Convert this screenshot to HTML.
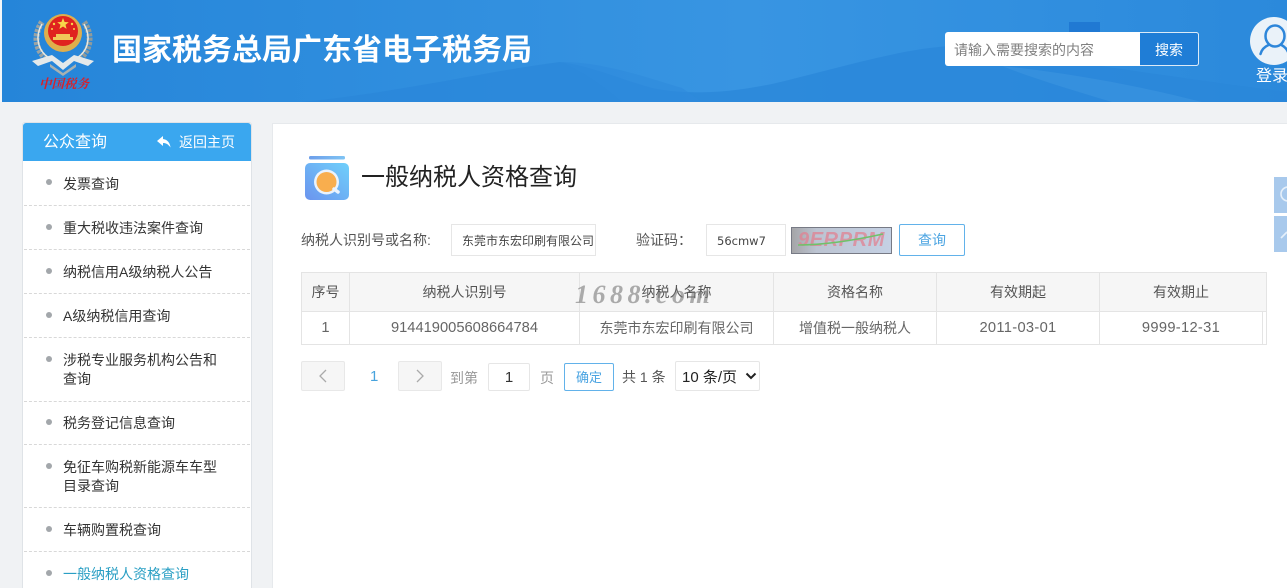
<!DOCTYPE html>
<html lang="zh-CN"><head><meta charset="utf-8"><title>一般纳税人资格查询</title>
<style>
html,body{margin:0;padding:0;width:1287px;height:588px;overflow:hidden;background:#f0f2f4;}
body{position:relative;font-family:"Liberation Sans","Noto Sans CJK SC",sans-serif;color:#333;}
.a{position:absolute;white-space:nowrap;}
.t{line-height:20px;height:20px;}
.c{text-align:center;}
.dash{position:absolute;left:24px;width:226px;height:0;border-top:1px dashed #d8d8d8;}
.dot{position:absolute;left:46px;width:6px;height:6px;border-radius:50%;background:#a3a7ab;}
.m{position:absolute;left:63px;font-size:14px;line-height:20px;color:#333;white-space:nowrap;}
.b{position:absolute;box-sizing:border-box;}
.v{position:absolute;width:1px;background:#e4e4e4;}
.th{position:absolute;top:282px;font-size:14px;line-height:20px;color:#555;text-align:center;white-space:nowrap;}
.td{position:absolute;top:318px;font-size:14px;line-height:20px;color:#666;text-align:center;white-space:nowrap;}
.n{font-size:14.7px;}
.d{font-size:14.7px;letter-spacing:.3px;}
</style></head><body>

<!-- header -->
<svg class="a" style="left:2px;top:0;" width="1285" height="102" viewBox="0 0 1285 102">
<defs>
<linearGradient id="g" x1="0" y1="0" x2="1" y2="0"><stop offset="0" stop-color="#2585d9"/><stop offset=".58" stop-color="#3895e2"/><stop offset=".8" stop-color="#318fdf"/><stop offset="1" stop-color="#2b89db"/></linearGradient>
</defs>
<rect width="1285" height="102" fill="url(#g)"/>
<path d="M0 102 L300 102 C400 92 480 72 558 62 C590 66 620 80 650 88 C690 96 730 92 770 84 C830 70 900 48 950 46 C1040 56 1160 76 1285 92 L1285 102Z" fill="#2a87da" opacity=".8"/>
<path d="M560 62 C600 62 640 76 680 88 L700 102 L620 102 C600 84 580 72 560 62Z" fill="#2e8bdc" opacity=".6"/>
<path d="M1000 66 C1060 72 1130 84 1200 102 L1110 102 C1070 90 1030 78 1000 66Z" fill="#3f97e2" opacity=".5"/>
<rect x="1067" y="22" width="31" height="12" fill="#2079d3"/>
</svg>
<div class="a" style="left:0;top:0;width:2px;height:102px;background:#f3f6f9;"></div>

<!-- logo -->
<svg class="a" style="left:28px;top:8px;" width="70" height="72" viewBox="0 0 70 72">
<path d="M14 14 C5 27 7 43 20 52" stroke="#9aa3a4" stroke-width="6" fill="none" stroke-dasharray="3 1.2"/>
<path d="M56 14 C65 27 63 43 50 52" stroke="#8f9b9c" stroke-width="6" fill="none" stroke-dasharray="3 1.2"/>
<path d="M14 16 C7 28 9 42 21 50" stroke="#e6e9e4" stroke-width="1.5" fill="none"/>
<path d="M56 16 C63 28 61 42 49 50" stroke="#e6e9e4" stroke-width="1.5" fill="none"/>
<circle cx="35" cy="25" r="19" fill="#dfae4c"/>
<circle cx="35" cy="23" r="15" fill="#e0231f"/>
<path d="M35 10l1.6 4 4.2.2-3.3 2.6 1.1 4.1-3.6-2.4-3.6 2.4 1.1-4.1-3.3-2.6 4.2-.2z" fill="#f7d64a"/>
<circle cx="26" cy="16" r="1.2" fill="#f7d64a"/><circle cx="44" cy="16" r="1.2" fill="#f7d64a"/><circle cx="24" cy="21" r="1" fill="#f7d64a"/><circle cx="46" cy="21" r="1" fill="#f7d64a"/>
<path d="M25 29h20v3H25zM28 26h14v3H28z" fill="#f0c75a"/>
<path d="M4 53 L24 47 L35 55 L46 47 L66 53 L60 58 L46 53 L35 62 L24 53 L10 58Z" fill="#e4e9ea"/>
<path d="M22 56 L35 65 L48 56 L48 59 L35 68 L22 59Z" fill="#a9b1b0"/>
</svg>
<div class="a" style="left:39px;top:76px;font-family:'Liberation Serif','Noto Serif CJK SC',serif;font-size:12.5px;line-height:16px;color:#d8202a;font-style:italic;font-weight:700;">中国税务</div>

<div class="a" style="left:112px;top:31px;font-size:30px;line-height:40px;font-weight:700;color:#fff;">国家税务总局广东省电子税务局</div>

<!-- search -->
<div class="b" style="left:945px;top:32px;width:254px;height:34px;background:#fff;border-radius:3px;"></div>
<div class="a t" style="left:954px;top:40px;font-size:14px;color:#808080;">请输入需要搜索的内容</div>
<div class="b" style="left:1140px;top:32px;width:59px;height:34px;background:#1f7dd6;border:1px solid #dceaf7;border-left:0;border-radius:0 3px 3px 0;"></div>
<div class="a t c" style="left:1140px;top:40px;width:58px;font-size:14px;color:#fff;">搜索</div>

<!-- avatar -->
<svg class="a" style="left:1250px;top:17px;" width="37" height="48" viewBox="0 0 37 48">
<circle cx="24" cy="24" r="24" fill="#eaf2f9"/>
<ellipse cx="25" cy="19" rx="9.5" ry="10.5" fill="none" stroke="#2d86da" stroke-width="2.5"/>
<path d="M10.5 37 C11.5 33 14 30 18.5 28 M31.5 28 C35 30 37 32 38 35" fill="none" stroke="#2d86da" stroke-width="2.5" stroke-linecap="round"/>
</svg>
<div class="a" style="left:1256px;top:66px;font-size:16px;line-height:22px;color:#fff;">登录</div>

<!-- sidebar -->
<div class="b" style="left:22px;top:122px;width:230px;height:470px;background:#fff;border:1px solid #dfe3e7;border-radius:3px 3px 0 0;"></div>
<div class="b" style="left:23px;top:123px;width:228px;height:38px;background:#3aa7ef;border-radius:3px 3px 0 0;"></div>
<div class="a" style="left:43px;top:132px;font-size:16px;line-height:22px;color:#fff;">公众查询</div>
<svg class="a" style="left:156px;top:135px;" width="16" height="14" viewBox="0 0 16 14"><path d="M7 1 L1 6 L7 11 V8 C10 8 12 9 14.5 12.5 C14 8 11.5 4.5 7 4Z" fill="#fff"/></svg>
<div class="a t" style="left:179px;top:132px;font-size:14px;color:#fff;">返回主页</div>

<div class="dot" style="top:179px"></div><div class="m" style="top:174px">发票查询</div><div class="dash" style="top:205px"></div>
<div class="dot" style="top:224px"></div><div class="m" style="top:218px">重大税收违法案件查询</div><div class="dash" style="top:249px"></div>
<div class="dot" style="top:268px"></div><div class="m" style="top:262px">纳税信用A级纳税人公告</div><div class="dash" style="top:293px"></div>
<div class="dot" style="top:312px"></div><div class="m" style="top:306px">A级纳税信用查询</div><div class="dash" style="top:337px"></div>
<div class="dot" style="top:356px"></div><div class="m" style="top:350px">涉税专业服务机构公告和</div><div class="m" style="top:369px">查询</div><div class="dash" style="top:401px"></div>
<div class="dot" style="top:419px"></div><div class="m" style="top:413px">税务登记信息查询</div><div class="dash" style="top:444px"></div>
<div class="dot" style="top:463px"></div><div class="m" style="top:457px">免征车购税新能源车车型</div><div class="m" style="top:476px">目录查询</div><div class="dash" style="top:507px"></div>
<div class="dot" style="top:526px"></div><div class="m" style="top:520px">车辆购置税查询</div><div class="dash" style="top:551px"></div>
<div class="dot" style="top:570px"></div><div class="m" style="top:564px;color:#2a9fc4;">一般纳税人资格查询</div>

<!-- main panel -->
<div class="b" style="left:272px;top:123px;width:1020px;height:470px;background:#fff;border:1px solid #e6e9ec;"></div>

<!-- title icon -->
<svg class="a" style="left:304px;top:155px;" width="46" height="46" viewBox="0 0 46 46">
<defs>
<linearGradient id="ig" x1="1" y1="0" x2="0" y2="1"><stop offset="0" stop-color="#6fd0fb"/><stop offset="1" stop-color="#6b94ee"/></linearGradient>
<linearGradient id="ib" x1="0" y1="0" x2="1" y2="0"><stop offset="0" stop-color="#6d9eea"/><stop offset="1" stop-color="#7fc4f4"/></linearGradient>
</defs>
<rect x="5" y="1" width="36" height="3.5" rx="1.5" fill="url(#ib)"/>
<rect x="1" y="8" width="44" height="37" rx="5" fill="url(#ig)"/>
<circle cx="22.5" cy="27" r="12.5" fill="#eaf3fd"/>
<circle cx="22.5" cy="27" r="10" fill="#f8ae4e"/>
<path d="M30 34 L34 37" stroke="#eaf3fd" stroke-width="3.5" stroke-linecap="round"/>
</svg>
<div class="a" style="left:361px;top:160px;font-size:24px;line-height:36px;color:#222;">一般纳税人资格查询</div>

<!-- form -->
<div class="a t" style="left:301px;top:230px;font-size:14px;color:#555;">纳税人识别号或名称:</div>
<div class="b" style="left:451px;top:224px;width:145px;height:32px;border:1px solid #e6e6e6;background:#fff;"></div>
<div class="a t" style="left:462px;top:231px;font-size:12px;color:#444;">东莞市东宏印刷有限公司</div>
<div class="a t" style="left:636px;top:230px;font-size:14px;color:#555;">验证码：</div>
<div class="b" style="left:706px;top:224px;width:80px;height:32px;border:1px solid #e6e6e6;background:#fff;"></div>
<div class="a t" style="left:717px;top:231px;font-family:'DejaVu Sans',sans-serif;font-size:11.5px;color:#444;">56cmw7</div>

<div class="b" style="left:791px;top:227px;width:101px;height:27px;background:linear-gradient(90deg,#a5a5a8,#bcc4d2 25%,#c5d1e4);border:1px solid #777a85;"></div>
<div class="a" style="left:798px;top:229px;font-family:'Liberation Sans',sans-serif;font-size:20px;line-height:22px;font-weight:700;font-style:italic;color:rgba(224,130,145,.75);letter-spacing:.6px;">9ERPRM</div>
<svg class="a" style="left:791px;top:227px;" width="101" height="27"><path d="M7 18 C30 18 60 14 92 7" stroke="#6fc26a" stroke-width="1.6" fill="none"/></svg>

<div class="b" style="left:899px;top:224px;width:66px;height:32px;border:1px solid #62b2ea;border-radius:2px;background:#fff;"></div>
<div class="a t c" style="left:899px;top:230px;width:66px;font-size:14px;color:#4ba4e2;">查询</div>

<!-- table -->
<div class="b" style="left:301px;top:272px;width:966px;height:73px;border:1px solid #e4e4e4;background:#fff;"></div>
<div class="b" style="left:302px;top:273px;width:964px;height:39px;background:#f6f6f6;border-bottom:1px solid #e4e4e4;"></div>
<div class="v" style="left:349px;top:273px;height:71px"></div>
<div class="v" style="left:579px;top:273px;height:71px"></div>
<div class="v" style="left:773px;top:273px;height:71px"></div>
<div class="v" style="left:936px;top:273px;height:71px"></div>
<div class="v" style="left:1099px;top:273px;height:71px"></div>
<div class="v" style="left:1262px;top:312px;height:32px"></div>

<div class="th" style="left:302px;width:47px;">序号</div>
<div class="th" style="left:350px;width:229px;">纳税人识别号</div>
<div class="th" style="left:580px;width:193px;">纳税人名称</div>
<div class="th" style="left:774px;width:162px;">资格名称</div>
<div class="th" style="left:937px;width:162px;">有效期起</div>
<div class="th" style="left:1100px;width:162px;">有效期止</div>

<div class="td n" style="left:302px;width:47px;">1</div>
<div class="td n" style="left:350px;width:229px;">914419005608664784</div>
<div class="td" style="left:580px;width:193px;">东莞市东宏印刷有限公司</div>
<div class="td" style="left:774px;width:162px;">增值税一般纳税人</div>
<div class="td d" style="left:937px;width:162px;">2011-03-01</div>
<div class="td d" style="left:1100px;width:162px;">9999-12-31</div>

<!-- watermark -->
<div class="a" style="left:575px;top:280px;font-family:'Liberation Serif',serif;font-size:26px;line-height:30px;font-weight:700;font-style:italic;color:rgba(120,120,120,.6);letter-spacing:4.5px;">1688.com</div>

<!-- pagination -->
<div class="b" style="left:301px;top:361px;width:44px;height:30px;background:#f6f6f6;border:1px solid #e8e8e8;border-radius:2px;"></div>
<svg class="a" style="left:317px;top:368px;" width="12" height="16"><path d="M9 2 L3 8 L9 14" fill="none" stroke="#aaa" stroke-width="1.3"/></svg>
<div class="a t" style="left:370px;top:367px;font-size:15px;color:#47a3dd;">1</div>
<div class="b" style="left:398px;top:361px;width:44px;height:30px;background:#f6f6f6;border:1px solid #e8e8e8;border-radius:2px;"></div>
<svg class="a" style="left:414px;top:368px;" width="12" height="16"><path d="M3 2 L9 8 L3 14" fill="none" stroke="#aaa" stroke-width="1.3"/></svg>
<div class="a t" style="left:450px;top:368px;font-size:14px;color:#999;">到第</div>
<div class="b" style="left:488px;top:363px;width:42px;height:28px;background:#fff;border:1px solid #e6e6e6;border-radius:2px;"></div>
<div class="a t c" style="left:488px;top:368px;width:42px;font-size:15px;color:#333;">1</div>
<div class="a t" style="left:540px;top:368px;font-size:14px;color:#999;">页</div>
<div class="b" style="left:564px;top:363px;width:50px;height:28px;background:#fff;border:1px solid #62b2ea;border-radius:2px;"></div>
<div class="a t c" style="left:564px;top:368px;width:50px;color:#4ba4e2;font-size:13px;">确定</div>
<div class="a t" style="left:622px;top:367px;font-size:14px;color:#555;">共 1 条</div>
<div class="b" style="left:675px;top:361px;width:85px;height:30px;background:#fff;border:1px solid #e6e6e6;border-radius:2px;"></div>
<div class="a t" style="left:682px;top:368px;font-size:15px;color:#222;">10 条/页</div>
<svg class="a" style="left:745px;top:372px;" width="12" height="9"><path d="M1.5 1.5 L6 6 L10.5 1.5" fill="none" stroke="#222" stroke-width="2"/></svg>

<!-- floats -->
<div class="b" style="left:1274px;top:177px;width:13px;height:36px;background:#a8c9ec;"></div>
<div class="b" style="left:1274px;top:216px;width:13px;height:36px;background:#a8c9ec;"></div>
<svg class="a" style="left:1274px;top:177px;" width="13" height="75"><circle cx="14" cy="17" r="7" fill="none" stroke="#e6f0fa" stroke-width="1.6"/><path d="M7 61 L13 55" stroke="#e6f0fa" stroke-width="1.6" fill="none"/></svg>

</body></html>
